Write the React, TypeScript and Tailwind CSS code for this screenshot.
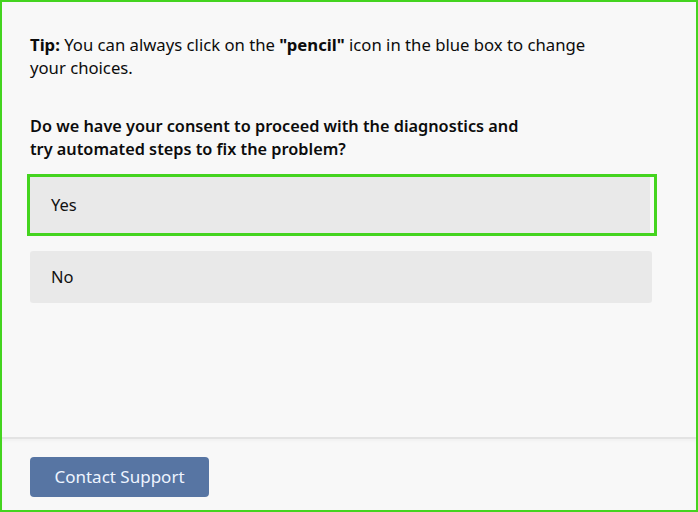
import React from "react";

const font = { fontFamily: '"Noto Sans", "Open Sans", sans-serif' };

const Option = ({ label, selected }: { label: string; selected?: boolean }) => {
  if (selected) {
    return (
      <div className="-ml-[3px] -mr-[5px] border-[3px] border-[#44d41f] pr-[4px]">
        <button className="flex h-[56px] w-full items-center bg-[#e9e9e9] px-[21px] text-left text-[16.5px] text-[#111]">
          {label}
        </button>
      </div>
    );
  }
  return (
    <button className="flex h-[52px] w-full items-center rounded-[3px] bg-[#e9e9e9] px-[21px] text-left text-[16.5px] text-[#111]">
      {label}
    </button>
  );
};

export default function App() {
  return (
    <div
      className="flex h-[512px] w-[698px] flex-col border-2 border-[#44d41f] bg-[#f8f8f8]"
      style={font}
    >
      <div className="flex-1 pl-[28px] pr-[44px] pt-[31px]">
        <p className="max-w-[580px] text-[16.7px] leading-[23px] text-[#0c0c0c]">
          <b className="font-bold">Tip:</b> You can always click on the{" "}
          <b className="font-bold">"pencil"</b> icon in the blue box to change
          your choices.
        </p>
        <p className="mt-[36px] max-w-[510px] text-[16.3px] font-semibold leading-[23px] text-[#0c0c0c]">
          Do we have your consent to proceed with the diagnostics and try
          automated steps to fix the problem?
        </p>
        <div className="mt-[13px] flex flex-col gap-[15px]">
          <Option label="Yes" selected />
          <Option label="No" />
        </div>
      </div>
      <div className="border-t-2 border-[#e3e3e3] px-[28px] pb-[13px] pt-[18px] shadow-[inset_0_2px_3px_rgba(0,0,0,0.03)]">
        <button className="h-[40px] w-[179px] rounded-[4px] bg-[#5775a3] text-[17px] text-[#eef4ff]">
          Contact Support
        </button>
      </div>
    </div>
  );
}
